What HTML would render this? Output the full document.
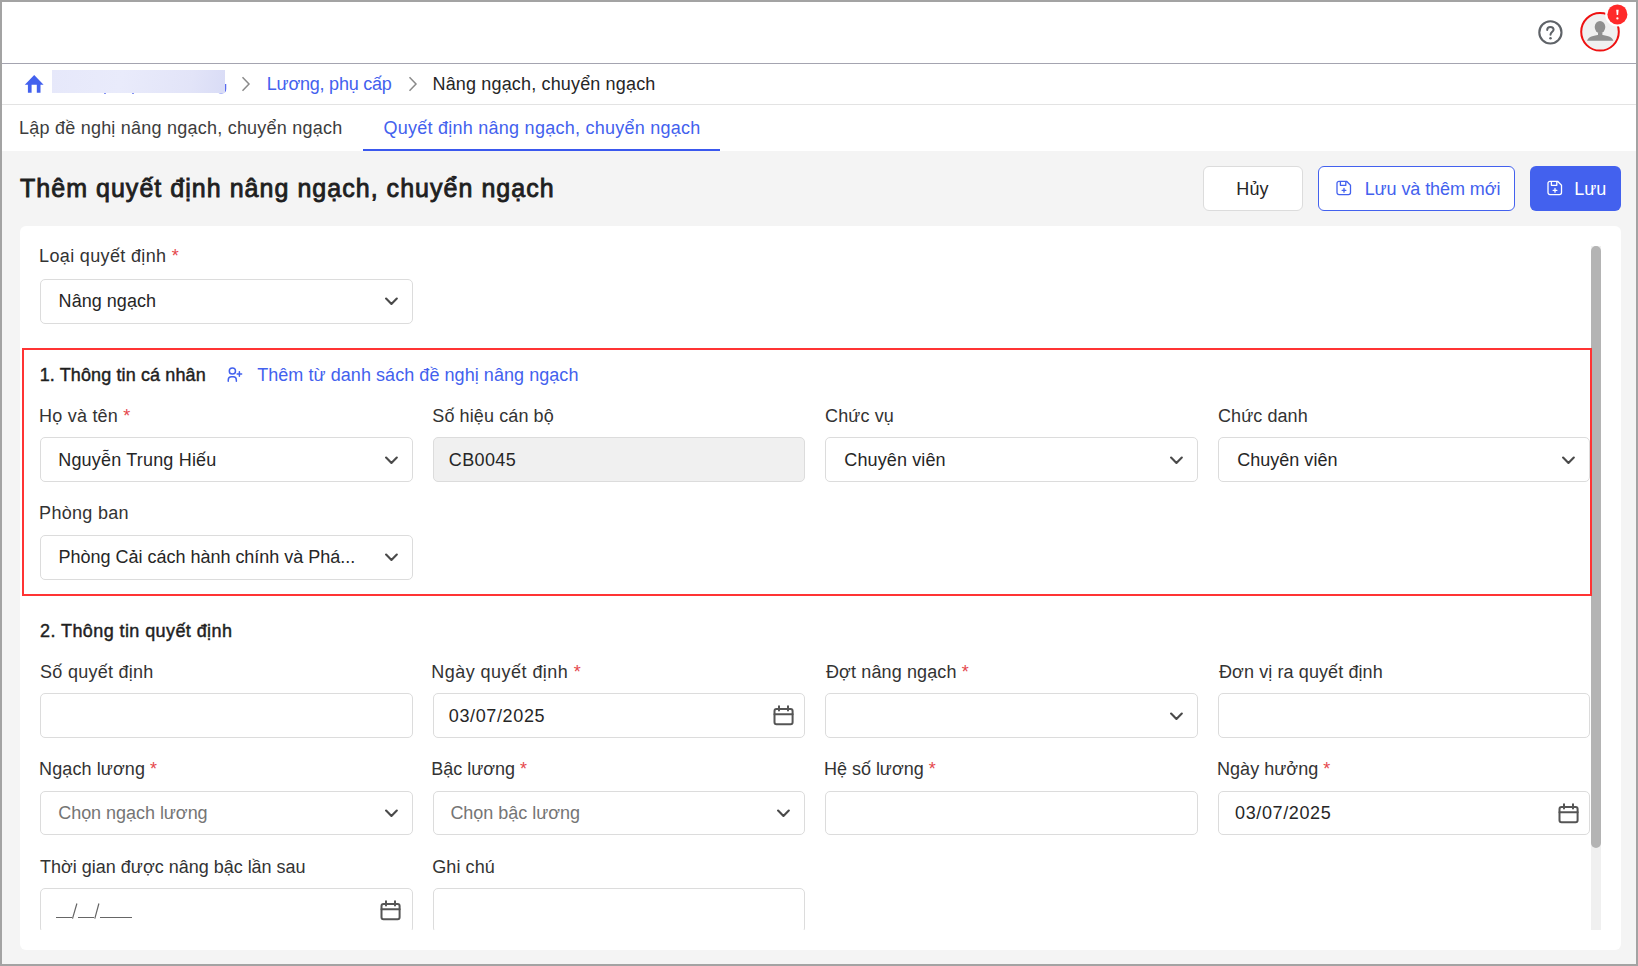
<!DOCTYPE html>
<html><head><meta charset="utf-8">
<style>
*{box-sizing:border-box;margin:0;padding:0}
html,body{width:1638px;height:966px;overflow:hidden;background:#a3a3a3;font-family:"Liberation Sans",sans-serif;color:#262626;position:relative}
.abs{position:absolute}
.t{position:absolute;white-space:nowrap}
.inp{position:absolute;height:45px;border:1px solid #dcdcdc;border-radius:5px;background:#fff}
.req{color:#e5484d}
</style></head><body>
<div class="abs" style="left:2px;top:2px;width:1634px;height:962px;background:#f4f4f4"></div>
<div class="abs" style="left:2px;top:2px;width:1634px;height:61px;background:#fff"></div>
<div class="abs" style="left:2px;top:63px;width:1634px;height:1px;background:#a4a4b0"></div>
<div class="abs" style="left:2px;top:64px;width:1634px;height:40px;background:#fff"></div>
<div class="abs" style="left:2px;top:104px;width:1634px;height:1px;background:#e3e3e3"></div>
<div class="abs" style="left:2px;top:105px;width:1634px;height:46px;background:#fff"></div>
<svg class="abs" style="left:1536px;top:18px" width="28" height="28" viewBox="0 0 28 28"><circle cx="14.4" cy="14.4" r="11.1" fill="none" stroke="#5f6368" stroke-width="2.1"/><path d="M11.2 12 C11.2 10 12.6 8.9 14.4 8.9 C16.2 8.9 17.6 10 17.6 11.7 C17.6 13.6 14.5 14.2 14.5 16.8" fill="none" stroke="#5f6368" stroke-width="2" stroke-linecap="round"/><circle cx="14.5" cy="20.3" r="1.25" fill="#5f6368"/></svg>
<svg class="abs" style="left:1578px;top:2px" width="60" height="60" viewBox="0 0 60 60"><circle cx="22" cy="29.8" r="18.8" fill="#f0f0f0" stroke="#ee1111" stroke-width="2"/><ellipse cx="22" cy="25.1" rx="5.3" ry="6.1" fill="#8f8f8f"/><path d="M20 30.5 H24.4 V33.5 H20 Z" fill="#8f8f8f"/><path d="M9 38.7 C10.2 35.2 15 33 22.2 33 C29.4 33 34.2 35.2 35.4 38.7 Z" fill="#8f8f8f"/><circle cx="39.4" cy="12.4" r="12.2" fill="#fff"/><circle cx="39.4" cy="12.4" r="10" fill="#ff2a2a"/><path d="M38.2 7.7 H40.6 L40.1 13 H38.7 Z" fill="#fff"/><circle cx="39.4" cy="16.4" r="1.15" fill="#fff"/></svg>
<svg class="abs" style="left:24px;top:74px" width="21" height="20" viewBox="0 0 21 20"><path d="M10.2 1 L19.6 10.8 H16.5 V18.8 H12.8 V10.8 H7.6 V18.8 H3.9 V10.8 H0.8 Z" fill="#4361ee"/></svg>
<div class="abs" style="left:103.5px;top:91px;width:2px;height:2.5px;background:#5a6cf0;border-radius:1px"></div>
<div class="abs" style="left:132px;top:91px;width:2px;height:2.5px;background:#5a6cf0;border-radius:1px"></div>
<svg class="abs" style="left:216px;top:84px" width="12" height="11" viewBox="0 0 12 11"><path d="M9.5 0 V5 C9.5 7.6 8 8.8 5 8.8 C3.6 8.8 2.8 8.5 2.2 8" fill="none" stroke="#5a6cf0" stroke-width="1.5"/></svg>
<div class="abs" style="left:52px;top:70px;width:173px;height:23px;background:linear-gradient(100deg,#e6e8fa 0%,#e9ebfb 40%,#e2e4f8 80%,#d9dcf6 100%)"></div>
<svg class="abs" style="left:241px;top:76px" width="10" height="16" viewBox="0 0 10 16"><path d="M1.5 1.2 L8 8 L1.5 14.8" fill="none" stroke="#8a8a8a" stroke-width="1.5"/></svg>
<div class="t" id="t1" style="left:266.80px;top:72.56px;font-size:18px;line-height:22px;color:#4361ee;font-weight:normal;letter-spacing:-0.223px;">Lương, phụ cấp</div>
<svg class="abs" style="left:408px;top:76px" width="10" height="16" viewBox="0 0 10 16"><path d="M1.5 1.2 L8 8 L1.5 14.8" fill="none" stroke="#8a8a8a" stroke-width="1.5"/></svg>
<div class="t" id="t2" style="left:432.50px;top:72.56px;font-size:18px;line-height:22px;color:#262626;font-weight:normal;letter-spacing:0.158px;">Nâng ngạch, chuyển ngạch</div>
<div class="t" id="t3" style="left:19.00px;top:116.76px;font-size:18px;line-height:22px;color:#3d3d3d;font-weight:normal;letter-spacing:0.228px;">Lập đề nghị nâng ngạch, chuyển ngạch</div>
<div class="t" id="t4" style="left:383.50px;top:116.56px;font-size:18px;line-height:22px;color:#4361ee;font-weight:normal;letter-spacing:0.251px;">Quyết định nâng ngạch, chuyển ngạch</div>
<div class="abs" style="left:363px;top:149px;width:357px;height:2px;background:#3a58ee"></div>
<div class="t" id="t5" style="left:20.00px;top:172.84px;font-size:25px;line-height:31px;color:#1f1f1f;font-weight:normal;letter-spacing:1.031px;-webkit-text-stroke:0.85px #1f1f1f;">Thêm quyết định nâng ngạch, chuyển ngạch</div>
<div class="abs" style="left:1203px;top:166px;width:100px;height:45px;background:#fff;border:1px solid #dcdcdc;border-radius:6px"></div>
<div class="t" id="t6" style="left:1236.30px;top:177.76px;font-size:18px;line-height:22px;color:#262626;font-weight:normal;letter-spacing:0.100px;">Hủy</div>
<div class="abs" style="left:1318px;top:166px;width:197px;height:45px;background:#fff;border:1.5px solid #4361ee;border-radius:6px"></div>
<svg class="abs" style="left:1336px;top:180.2px" width="16" height="16" viewBox="0 0 16 16"><path d="M3 1.3 H10.6 L14.5 5.2 V12.6 A2 2 0 0 1 12.5 14.6 H3 A2 2 0 0 1 1 12.6 V3.3 A2 2 0 0 1 3 1.3 Z M4.4 1.3 V5.3 H9.8 V1.3 M8 8.4 V12.2 M6.1 10.3 H9.9" fill="none" stroke="#4361ee" stroke-width="1.3" stroke-linejoin="round" stroke-linecap="round"/></svg>
<div class="t" id="t7" style="left:1364.70px;top:177.76px;font-size:18px;line-height:22px;color:#4361ee;font-weight:normal;letter-spacing:-0.086px;">Lưu và thêm mới</div>
<div class="abs" style="left:1530px;top:166px;width:91px;height:45px;background:#4361ee;border-radius:6px"></div>
<svg class="abs" style="left:1547px;top:180.2px" width="16" height="16" viewBox="0 0 16 16"><path d="M3 1.3 H10.6 L14.5 5.2 V12.6 A2 2 0 0 1 12.5 14.6 H3 A2 2 0 0 1 1 12.6 V3.3 A2 2 0 0 1 3 1.3 Z M4.4 1.3 V5.3 H9.8 V1.3 M8 8.4 V12.2 M6.1 10.3 H9.9" fill="none" stroke="#fff" stroke-width="1.3" stroke-linejoin="round" stroke-linecap="round"/></svg>
<div class="t" id="t8" style="left:1574.30px;top:177.76px;font-size:18px;line-height:22px;color:#fff;font-weight:normal;letter-spacing:-0.000px;">Lưu</div>
<div class="abs" style="left:20px;top:226px;width:1601px;height:724px;background:#fff;border-radius:6px"></div>
<div class="abs" style="left:20px;top:226px;width:1572px;height:704px;overflow:hidden">
<div class="t" id="t9" style="left:19.10px;top:19.26px;font-size:18px;line-height:22px;color:#333;font-weight:normal;letter-spacing:0.345px;">Loại quyết định <span class="req">*</span></div>
<div class="inp" style="left:20px;top:53px;width:373px;height:45px;"></div>
<div class="t" id="t10" style="left:38.60px;top:63.56px;font-size:18px;line-height:22px;color:#262626;font-weight:normal;letter-spacing:0.033px;">Nâng ngạch</div>
<svg class="abs" style="left:365px;top:71px" width="14" height="9" viewBox="0 0 14 9"><path d="M1.1 1.5 L6.45 7 L11.8 1.5" fill="none" stroke="#4a4a4a" stroke-width="2.1" stroke-linecap="round" stroke-linejoin="round"/></svg>
<div class="t" id="t11" style="left:19.70px;top:137.76px;font-size:18px;line-height:22px;color:#1f1f1f;font-weight:normal;letter-spacing:0.117px;-webkit-text-stroke:0.45px #1f1f1f;">1. Thông tin cá nhân</div>
<svg class="abs" style="left:206px;top:140px" width="18" height="18" viewBox="0 0 18 18"><circle cx="6.4" cy="5" r="3.1" fill="none" stroke="#4361ee" stroke-width="1.5"/><path d="M2.25 15.2 V14 C2.25 12 3.5 10.85 5.5 10.85 H7.2 C9.2 10.85 10.35 12 10.35 14 V15.2 M13.4 5.8 V10.3 M11.15 8.05 H15.65" fill="none" stroke="#4361ee" stroke-width="1.5" stroke-linecap="round"/></svg>
<div class="t" id="t12" style="left:237.20px;top:137.76px;font-size:18px;line-height:22px;color:#4361ee;font-weight:normal;letter-spacing:0.056px;">Thêm từ danh sách đề nghị nâng ngạch</div>
<div class="t" id="t13" style="left:19.10px;top:178.76px;font-size:18px;line-height:22px;color:#333;font-weight:normal;letter-spacing:0.210px;">Họ và tên <span class="req">*</span></div>
<div class="t" id="t14" style="left:412.30px;top:178.76px;font-size:18px;line-height:22px;color:#333;font-weight:normal;letter-spacing:0.103px;">Số hiệu cán bộ</div>
<div class="t" id="t15" style="left:805.00px;top:178.76px;font-size:18px;line-height:22px;color:#333;font-weight:normal;letter-spacing:0.134px;">Chức vụ</div>
<div class="t" id="t16" style="left:1198.00px;top:178.76px;font-size:18px;line-height:22px;color:#333;font-weight:normal;letter-spacing:0.071px;">Chức danh</div>
<div class="inp" style="left:20px;top:211px;width:373px;height:45px;"></div>
<div class="t" id="t17" style="left:38.20px;top:222.56px;font-size:18px;line-height:22px;color:#262626;font-weight:normal;letter-spacing:0.190px;">Nguyễn Trung Hiếu</div>
<svg class="abs" style="left:365px;top:230px" width="14" height="9" viewBox="0 0 14 9"><path d="M1.1 1.5 L6.45 7 L11.8 1.5" fill="none" stroke="#4a4a4a" stroke-width="2.1" stroke-linecap="round" stroke-linejoin="round"/></svg>
<div class="inp" style="left:413px;top:211px;width:372px;height:45px;background:#f0f0f0;"></div>
<div class="t" id="t18" style="left:428.80px;top:222.56px;font-size:18px;line-height:22px;color:#262626;font-weight:normal;letter-spacing:0.360px;">CB0045</div>
<div class="inp" style="left:805px;top:211px;width:373px;height:45px;"></div>
<div class="t" id="t19" style="left:824.30px;top:222.56px;font-size:18px;line-height:22px;color:#262626;font-weight:normal;letter-spacing:0.120px;">Chuyên viên</div>
<svg class="abs" style="left:1150px;top:230px" width="14" height="9" viewBox="0 0 14 9"><path d="M1.1 1.5 L6.45 7 L11.8 1.5" fill="none" stroke="#4a4a4a" stroke-width="2.1" stroke-linecap="round" stroke-linejoin="round"/></svg>
<div class="inp" style="left:1198px;top:211px;width:372px;height:45px;"></div>
<div class="t" id="t20" style="left:1217.20px;top:222.56px;font-size:18px;line-height:22px;color:#262626;font-weight:normal;letter-spacing:0.020px;">Chuyên viên</div>
<svg class="abs" style="left:1542px;top:230px" width="14" height="9" viewBox="0 0 14 9"><path d="M1.1 1.5 L6.45 7 L11.8 1.5" fill="none" stroke="#4a4a4a" stroke-width="2.1" stroke-linecap="round" stroke-linejoin="round"/></svg>
<div class="t" id="t21" style="left:19.10px;top:276.16px;font-size:18px;line-height:22px;color:#333;font-weight:normal;letter-spacing:0.300px;">Phòng ban</div>
<div class="inp" style="left:20px;top:309px;width:373px;height:45px;"></div>
<div class="t" id="t22" style="left:38.60px;top:319.56px;font-size:18px;line-height:22px;color:#262626;font-weight:normal;letter-spacing:-0.017px;">Phòng Cải cách hành chính và Phá...</div>
<svg class="abs" style="left:365px;top:327px" width="14" height="9" viewBox="0 0 14 9"><path d="M1.1 1.5 L6.45 7 L11.8 1.5" fill="none" stroke="#4a4a4a" stroke-width="2.1" stroke-linecap="round" stroke-linejoin="round"/></svg>
<div class="t" id="t23" style="left:20.10px;top:393.86px;font-size:18px;line-height:22px;color:#1f1f1f;font-weight:normal;letter-spacing:0.411px;-webkit-text-stroke:0.45px #1f1f1f;">2. Thông tin quyết định</div>
<div class="t" id="t24" style="left:20.10px;top:434.86px;font-size:18px;line-height:22px;color:#333;font-weight:normal;letter-spacing:0.264px;">Số quyết định</div>
<div class="t" id="t25" style="left:411.30px;top:434.86px;font-size:18px;line-height:22px;color:#333;font-weight:normal;letter-spacing:0.458px;">Ngày quyết định <span class="req">*</span></div>
<div class="t" id="t26" style="left:806.00px;top:434.86px;font-size:18px;line-height:22px;color:#333;font-weight:normal;letter-spacing:0.118px;">Đợt nâng ngạch <span class="req">*</span></div>
<div class="t" id="t27" style="left:1199.00px;top:434.86px;font-size:18px;line-height:22px;color:#333;font-weight:normal;letter-spacing:0.097px;">Đơn vị ra quyết định</div>
<div class="inp" style="left:20px;top:467px;width:373px;height:45px;"></div>
<div class="inp" style="left:413px;top:467px;width:372px;height:45px;"></div>
<div class="t" id="t28" style="left:428.80px;top:478.56px;font-size:18px;line-height:22px;color:#262626;font-weight:normal;letter-spacing:0.630px;">03/07/2025</div>
<svg class="abs" style="left:753px;top:478px" width="22" height="22" viewBox="0 0 22 22"><rect x="1.5" y="4.9" width="18.1" height="15.4" rx="2" fill="none" stroke="#555" stroke-width="2"/><path d="M1.5 10.3 H19.6 M6 2.3 V6.4 M15 2.3 V6.4" stroke="#555" stroke-width="2" stroke-linecap="round"/></svg>
<div class="inp" style="left:805px;top:467px;width:373px;height:45px;"></div>
<svg class="abs" style="left:1150px;top:486px" width="14" height="9" viewBox="0 0 14 9"><path d="M1.1 1.5 L6.45 7 L11.8 1.5" fill="none" stroke="#4a4a4a" stroke-width="2.1" stroke-linecap="round" stroke-linejoin="round"/></svg>
<div class="inp" style="left:1198px;top:467px;width:372px;height:45px;"></div>
<div class="t" id="t29" style="left:19.10px;top:532.26px;font-size:18px;line-height:22px;color:#333;font-weight:normal;letter-spacing:0.090px;">Ngạch lương <span class="req">*</span></div>
<div class="t" id="t30" style="left:411.30px;top:532.26px;font-size:18px;line-height:22px;color:#333;font-weight:normal;letter-spacing:-0.020px;">Bậc lương <span class="req">*</span></div>
<div class="t" id="t31" style="left:804.00px;top:532.26px;font-size:18px;line-height:22px;color:#333;font-weight:normal;letter-spacing:-0.024px;">Hệ số lương <span class="req">*</span></div>
<div class="t" id="t32" style="left:1197.00px;top:532.26px;font-size:18px;line-height:22px;color:#333;font-weight:normal;letter-spacing:0.039px;">Ngày hưởng <span class="req">*</span></div>
<div class="inp" style="left:20px;top:565px;width:373px;height:44px;"></div>
<div class="t" id="t33" style="left:38.20px;top:575.56px;font-size:18px;line-height:22px;color:#757575;font-weight:normal;letter-spacing:-0.035px;">Chọn ngạch lương</div>
<svg class="abs" style="left:365px;top:583px" width="14" height="9" viewBox="0 0 14 9"><path d="M1.1 1.5 L6.45 7 L11.8 1.5" fill="none" stroke="#4a4a4a" stroke-width="2.1" stroke-linecap="round" stroke-linejoin="round"/></svg>
<div class="inp" style="left:413px;top:565px;width:372px;height:44px;"></div>
<div class="t" id="t34" style="left:430.40px;top:575.56px;font-size:18px;line-height:22px;color:#757575;font-weight:normal;letter-spacing:-0.031px;">Chọn bậc lương</div>
<svg class="abs" style="left:757px;top:583px" width="14" height="9" viewBox="0 0 14 9"><path d="M1.1 1.5 L6.45 7 L11.8 1.5" fill="none" stroke="#4a4a4a" stroke-width="2.1" stroke-linecap="round" stroke-linejoin="round"/></svg>
<div class="inp" style="left:805px;top:565px;width:373px;height:44px;"></div>
<div class="inp" style="left:1198px;top:565px;width:372px;height:44px;"></div>
<div class="t" id="t35" style="left:1215.00px;top:575.56px;font-size:18px;line-height:22px;color:#262626;font-weight:normal;letter-spacing:0.624px;">03/07/2025</div>
<svg class="abs" style="left:1538px;top:576px" width="22" height="22" viewBox="0 0 22 22"><rect x="1.5" y="4.9" width="18.1" height="15.4" rx="2" fill="none" stroke="#555" stroke-width="2"/><path d="M1.5 10.3 H19.6 M6 2.3 V6.4 M15 2.3 V6.4" stroke="#555" stroke-width="2" stroke-linecap="round"/></svg>
<div class="t" id="t36" style="left:20.10px;top:629.76px;font-size:18px;line-height:22px;color:#333;font-weight:normal;letter-spacing:-0.010px;">Thời gian được nâng bậc lần sau</div>
<div class="t" id="t37" style="left:412.30px;top:629.76px;font-size:18px;line-height:22px;color:#333;font-weight:normal;letter-spacing:0.064px;">Ghi chú</div>
<div class="inp" style="left:20px;top:662px;width:373px;height:45px;"></div>
<svg class="abs" style="left:360px;top:673px" width="22" height="22" viewBox="0 0 22 22"><rect x="1.5" y="4.9" width="18.1" height="15.4" rx="2" fill="none" stroke="#555" stroke-width="2"/><path d="M1.5 10.3 H19.6 M6 2.3 V6.4 M15 2.3 V6.4" stroke="#555" stroke-width="2" stroke-linecap="round"/></svg>
<svg class="abs" style="left:30px;top:669px" width="90" height="30" viewBox="0 0 90 30"><path d="M6 22.5 H22 M28 22.5 H44 M50 22.5 H82 M26.9 8.5 L22.5 23.6 M48.9 8.5 L44.8 23.6" stroke="#666" stroke-width="1.2" fill="none"/></svg>
<div class="inp" style="left:413px;top:662px;width:372px;height:45px;"></div>
</div>
<div class="abs" style="left:1591px;top:246px;width:10px;height:684px;background:#f0f0f0"></div>
<div class="abs" style="left:1591px;top:246px;width:10px;height:602px;background:#b4b4b4;border-radius:5px"></div>
<div class="abs" style="left:22px;top:348px;width:1570px;height:248px;border:2px solid #ff3434"></div>
</body></html>
